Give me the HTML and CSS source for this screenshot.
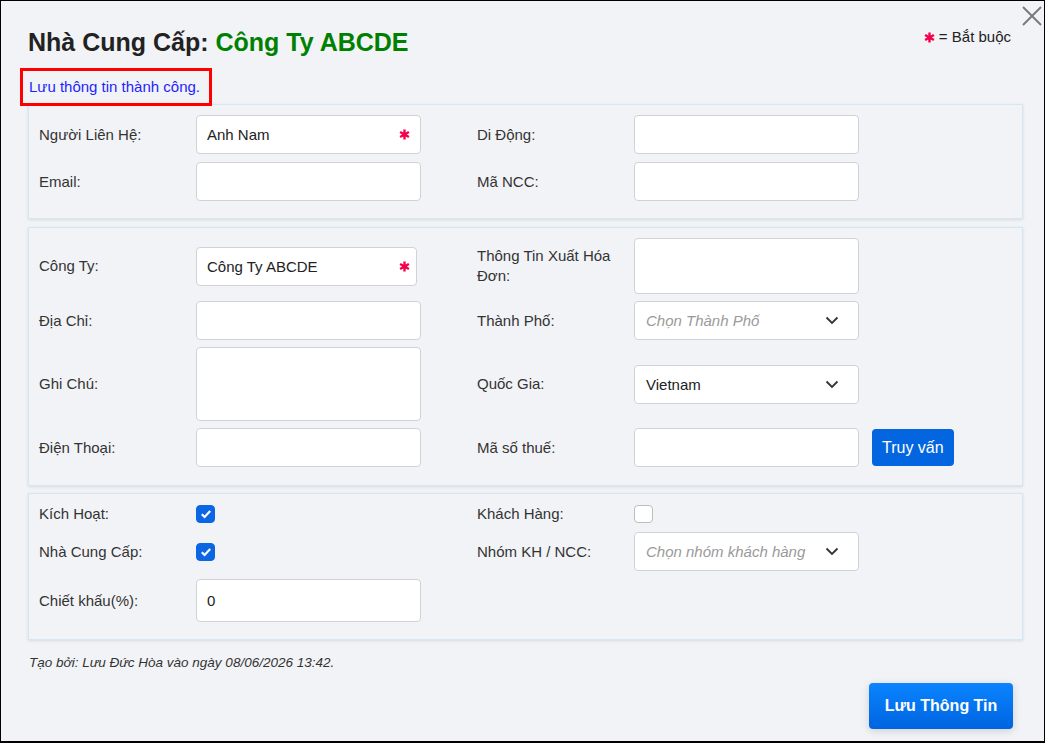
FILE: index.html
```html
<!DOCTYPE html>
<html lang="vi">
<head>
<meta charset="utf-8">
<title>Nhà Cung Cấp</title>
<link rel="stylesheet" href="styles.css">
</head>
<body>
<button class="close" aria-label="Đóng"><svg width="22" height="22" viewBox="0 0 22 22"><path d="M2 2 L20 20 M20 2 L2 20" stroke="#7a7a7a" stroke-width="2" fill="none"/></svg></button>

<header class="top">
  <h1 class="title">Nhà Cung Cấp: <span class="green">Công Ty ABCDE</span></h1>
  <div class="legend"><svg class="star" width="11" height="11" viewBox="0 0 12 12"><path d="M6 0.5 V11.5 M1.2 3.2 L10.8 8.8 M10.8 3.2 L1.2 8.8" stroke="#f5004a" stroke-width="2.6" fill="none"/></svg> = Bắt buộc</div>
</header>

<div class="msg">Lưu thông tin thành công.</div>

<section class="panel p1">
  <label class="lbl">Người Liên Hệ:</label>
  <div class="req"><input class="in" type="text" value="Anh Nam"><svg class="star abs" width="11" height="11" viewBox="0 0 12 12"><path d="M6 0.5 V11.5 M1.2 3.2 L10.8 8.8 M10.8 3.2 L1.2 8.8" stroke="#f5004a" stroke-width="2.6" fill="none"/></svg></div>
  <label class="lbl r">Di Động:</label>
  <input class="in" type="text" value="">
  <span></span>

  <label class="lbl">Email:</label>
  <input class="in" type="text" value="">
  <label class="lbl r">Mã NCC:</label>
  <input class="in" type="text" value="">
  <span></span>
</section>

<section class="panel p2">
  <label class="lbl">Công Ty:</label>
  <div class="req"><input class="in narrow" type="text" value="Công Ty ABCDE"><svg class="star abs" width="11" height="11" viewBox="0 0 12 12"><path d="M6 0.5 V11.5 M1.2 3.2 L10.8 8.8 M10.8 3.2 L1.2 8.8" stroke="#f5004a" stroke-width="2.6" fill="none"/></svg></div>
  <label class="lbl r">Thông Tin Xuất Hóa Đơn:</label>
  <textarea class="in ta1"></textarea>
  <span></span>

  <label class="lbl">Địa Chỉ:</label>
  <input class="in" type="text" value="">
  <label class="lbl r">Thành Phố:</label>
  <div class="in sel"><span class="ph">Chọn Thành Phố</span><svg class="chev" width="14" height="9" viewBox="0 0 14 9"><path d="M1.5 1.5 L7 7 L12.5 1.5" stroke="#333" stroke-width="1.8" fill="none"/></svg></div>
  <span></span>

  <label class="lbl">Ghi Chú:</label>
  <textarea class="in ta2"></textarea>
  <label class="lbl r">Quốc Gia:</label>
  <div class="in sel"><span class="val">Vietnam</span><svg class="chev" width="14" height="9" viewBox="0 0 14 9"><path d="M1.5 1.5 L7 7 L12.5 1.5" stroke="#333" stroke-width="1.8" fill="none"/></svg></div>
  <span></span>

  <label class="lbl">Điện Thoại:</label>
  <input class="in" type="text" value="">
  <label class="lbl r">Mã số thuế:</label>
  <input class="in" type="text" value="">
  <button class="btn-q">Truy vấn</button>
</section>

<section class="panel p3">
  <label class="lbl">Kích Hoạt:</label>
  <span class="cb on"><svg width="12" height="10" viewBox="0 0 12 10"><path d="M1.8 5.2 L4.6 8 L10.2 2" stroke="#fff" stroke-width="2.2" fill="none"/></svg></span>
  <label class="lbl r">Khách Hàng:</label>
  <span class="cb"></span>
  <span></span>

  <label class="lbl">Nhà Cung Cấp:</label>
  <span class="cb on"><svg width="12" height="10" viewBox="0 0 12 10"><path d="M1.8 5.2 L4.6 8 L10.2 2" stroke="#fff" stroke-width="2.2" fill="none"/></svg></span>
  <label class="lbl r">Nhóm KH / NCC:</label>
  <div class="in sel"><span class="ph">Chọn nhóm khách hàng</span><svg class="chev" width="14" height="9" viewBox="0 0 14 9"><path d="M1.5 1.5 L7 7 L12.5 1.5" stroke="#333" stroke-width="1.8" fill="none"/></svg></div>
  <span></span>

  <label class="lbl">Chiết khấu(%):</label>
  <input class="in tall" type="text" value="0">
  <span></span>
  <span></span>
  <span></span>
</section>

<p class="meta">Tạo bởi: Lưu Đức Hòa vào ngày 08/06/2026 13:42.</p>

<button class="save">Lưu Thông Tin</button>
</body>
</html>
```

FILE: styles.css
```css
* { box-sizing: border-box; }

html { background: #f2f3f7; }

body {
  margin: 0;
  width: 1045px;
  height: 743px;
  border: 1px solid #000;
  border-bottom-width: 2px;
  background: #f2f3f7;
  font-family: "Liberation Sans", Arial, sans-serif;
  color: #333;
  position: relative;
  padding: 0 21px 0 27px;
  overflow: hidden;
}

.close {
  position: absolute;
  top: 4px;
  right: 1px;
  width: 22px;
  height: 22px;
  padding: 0;
  border: 0;
  background: none;
  cursor: pointer;
}
.close svg { display: block; }

.top {
  display: flex;
  justify-content: space-between;
  align-items: flex-start;
  padding-top: 26px;
}

.title {
  margin: 0;
  font-size: 25px;
  line-height: 30px;
  font-weight: bold;
  color: #222;
}
.green { color: #008000; }

.legend {
  margin-right: 12px;
  font-size: 15px;
  line-height: 20px;
  color: #222;
  display: flex;
  align-items: center;
  gap: 4px;
}
.star { display: block; }

.msg {
  width: fit-content;
  margin: 14px 0 1px -5px;
  padding: 6px 9px 6px 6px;
  line-height: 20px;
  font-size: 15px;
  color: #1f1fff;
  outline: 3px solid #f00;
}

.panel {
  display: grid;
  grid-template-columns: 157px 225px 213px 225px auto;
  align-items: center;
  justify-items: start;
  border: 1px solid #d3e8f2;
  box-shadow: 0 1px 3px rgba(0, 0, 0, 0.1);
  padding: 10px 10px 17px;
  margin-bottom: 8px;
}
.p1 { row-gap: 8px; }
.p2 { row-gap: 7px; padding-bottom: 18px; margin-bottom: 7px; }
.p3 { row-gap: 8px; padding-bottom: 17px; margin-bottom: 0; }

.lbl {
  font-size: 15px;
  line-height: 20px;
  color: #333;
}
.lbl.r { padding-left: 56px; }

.in {
  display: block;
  width: 225px;
  height: 39px;
  margin: 0;
  background: #fff;
  border: 1px solid #cfd3d8;
  border-radius: 4px;
  padding: 0 10px;
  font-family: inherit;
  font-size: 15px;
  color: #222;
  outline: none;
}
.in.narrow { width: 221px; }
.in.tall { height: 43px; }
.ta1 { height: 56px; resize: none; }
.ta2 { height: 74px; resize: none; }

.req { position: relative; width: 225px; }
.star.abs {
  position: absolute;
  left: 203px;
  top: 14px;
}

.sel {
  display: flex;
  align-items: center;
  justify-content: space-between;
  padding: 0 19px 0 11px;
}
.ph { color: #9a9a9a; font-style: italic; }
.val { color: #222; }
.chev { display: block; }

.btn-q {
  margin-left: 13px;
  height: 37px;
  padding: 0 10px;
  border: 0;
  border-radius: 4px;
  background: #0366e0;
  color: #fff;
  font-family: inherit;
  font-size: 16px;
}

.cb {
  display: flex;
  align-items: center;
  justify-content: center;
  width: 19px;
  height: 18px;
  border: 1px solid #bdbdbd;
  border-radius: 4px;
  background: #fff;
}
.cb.on { background: #0b66e4; border-color: #0b66e4; }
.cb svg { display: block; }

.meta {
  margin: 15px 0 0 1px;
  font-size: 13.5px;
  line-height: 16px;
  font-style: italic;
  color: #333;
}

.save {
  display: block;
  margin: 12px 10px 0 auto;
  width: 144px;
  height: 46px;
  border: 0;
  border-radius: 4px;
  background: linear-gradient(#0a84ff, #0064e0);
  box-shadow: 0 2px 8px rgba(0, 0, 0, 0.15);
  color: #fff;
  font-family: inherit;
  font-size: 16px;
  font-weight: bold;
}
```
